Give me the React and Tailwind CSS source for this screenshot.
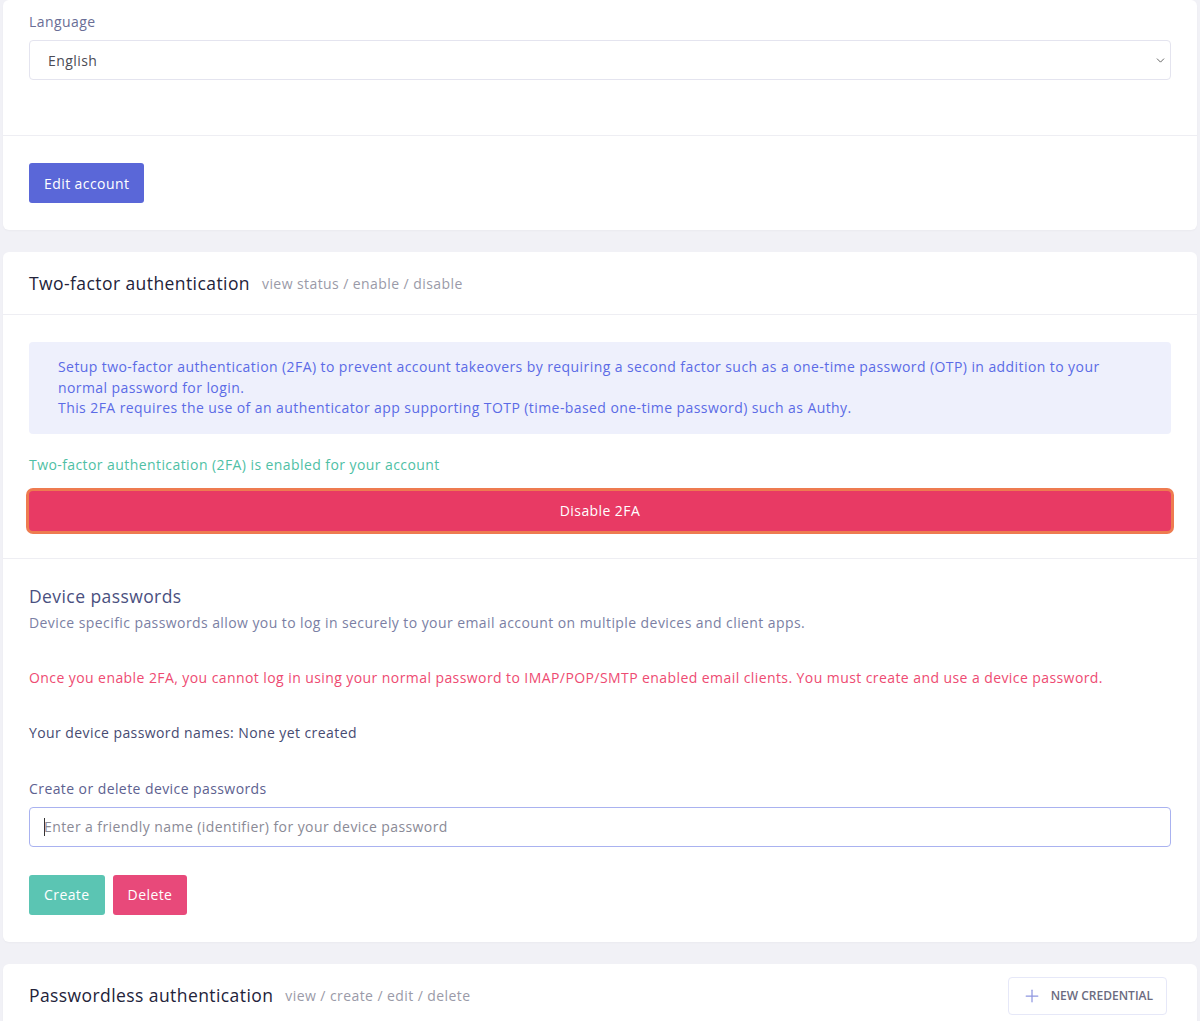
import { Plus, ChevronDown } from "lucide-react";

const font = { fontFamily: '"Open Sans", "Noto Sans", sans-serif', letterSpacing: "0.03em" };

const Card = ({ children }) => (
  <div className="bg-white rounded-md shadow-[0_1px_2px_rgba(0,0,0,0.03)]">{children}</div>
);

const App = () => {
  return (
    <div className="min-h-screen bg-[#f1f1f6] px-[3px] text-[14px]" style={font}>
      <div className="flex flex-col gap-[22px] w-[1194px]">
        <Card>
          <div className="px-[26px] pt-[11px] pb-[55px]">
            <div className="text-[#6a6e96] leading-[22px] mb-[7px]">Language</div>
            <div className="h-[40px] border border-[#e4e4ef] rounded-[4px] flex items-center justify-between pl-[18px] pr-[3px] text-[#4b4b55]">
              <span>English</span>
              <ChevronDown className="w-[13px] h-[13px] text-[#444]" strokeWidth={1.5} />
            </div>
          </div>
          <div className="border-t border-[#eeeef3] px-[26px] pt-[27px] pb-[27px]">
            <button className="h-[40px] px-[15px] rounded-[3px] bg-[#5a67d8] text-white">
              Edit account
            </button>
          </div>
        </Card>

        <Card>
          <div className="h-[63px] border-b border-[#eeeef3] px-[26px] flex items-center gap-[12px]">
            <span className="text-[#23233a] text-[17.5px]">Two-factor authentication</span>
            <span className="text-[#9a9aa8] text-[14px] mt-[1px]">view status / enable / disable</span>
          </div>
          <div className="px-[26px] pt-[27px] pb-[27px]">
            <div className="bg-[#eef0fc] rounded-[4px] px-[29px] py-[15px] text-[#5b6be6] leading-[20.5px]">
              Setup two-factor authentication (2FA) to prevent account takeovers by requiring a second factor such as a one-time password (OTP) in addition to your normal password for login.
              <br />
              This 2FA requires the use of an authenticator app supporting TOTP (time-based one-time password) such as Authy.
            </div>
            <div className="text-[#4fbfa5] leading-[22px] mt-[20px]">
              Two-factor authentication (2FA) is enabled for your account
            </div>
            <button className="mt-[15px] w-full h-[40px] rounded-[4px] bg-[#e83a64] text-white ring-[3px] ring-[#ee7b50]">
              Disable 2FA
            </button>
          </div>
          <div className="border-t border-[#eeeef3] px-[26px] pt-[25px] pb-[27px]">
            <div className="text-[#4a5080] text-[17.5px] leading-[24px]">Device passwords</div>
            <div className="text-[#7b7fa4] leading-[22px] mt-[4px]">
              Device specific passwords allow you to log in securely to your email account on multiple devices and client apps.
            </div>
            <div className="text-[#ee4b72] leading-[22px] mt-[33px]">
              Once you enable 2FA, you cannot log in using your normal password to IMAP/POP/SMTP enabled email clients. You must create and use a device password.
            </div>
            <div className="text-[#464b72] font-medium leading-[22px] mt-[33px]">
              Your device password names: None yet created
            </div>
            <div className="text-[#5d6190] leading-[22px] mt-[34px]">Create or delete device passwords</div>
            <div className="mt-[7px] h-[40px] border border-[#a9b2f0] rounded-[4px] flex items-center pl-[14px] text-[#8a8a96]">
              <span className="w-px h-[18px] bg-[#333] mr-[-1px]"></span>
              <span>Enter a friendly name (identifier) for your device password</span>
            </div>
            <div className="flex gap-[8px] mt-[28px]">
              <button className="h-[40px] px-[15px] rounded-[3px] bg-[#5bc5b3] text-white">Create</button>
              <button className="h-[40px] px-[15px] rounded-[3px] bg-[#e8497a] text-white">Delete</button>
            </div>
          </div>
        </Card>

        <Card>
          <div className="h-[63px] px-[26px] flex items-center justify-between">
            <div className="flex items-center gap-[12px]">
              <span className="text-[#23233a] text-[17.5px]">Passwordless authentication</span>
              <span className="text-[#9a9aa8] text-[14px] mt-[1px]">view / create / edit / delete</span>
            </div>
            <button
              className="h-[38px] mt-[1px] mr-[4px] pl-[13px] pr-[13px] border border-[#e6e8f8] rounded-[4px] flex items-center gap-[9px] text-[#6b6b80] text-[12px] font-semibold"
              style={{ letterSpacing: "0" }}
            >
              <Plus className="w-[20px] h-[20px] text-[#8f97e0]" strokeWidth={1.5} />
              NEW CREDENTIAL
            </button>
          </div>
        </Card>
      </div>
    </div>
  );
};

export default App;
